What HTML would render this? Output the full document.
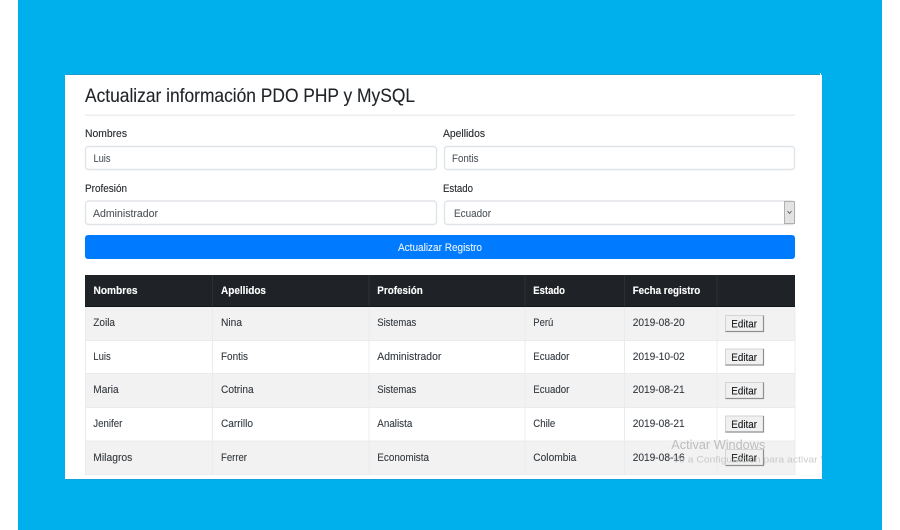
<!DOCTYPE html>
<html lang="es">
<head>
<meta charset="utf-8">
<title>Actualizar información PDO PHP y MySQL</title>
<style>
html,body{margin:0;padding:0;width:900px;height:530px;overflow:hidden;background:#fff}
svg{display:block;position:absolute;left:0;top:0}
text{font-family:"Liberation Sans",Arial,sans-serif;font-size:11.2px;fill:#343a40;stroke:#343a40;stroke-width:.12;filter:blur(.2px)}
.l{fill:#24282c;stroke:#24282c}
.i{fill:#50575e;stroke:#50575e}
.h{font-weight:bold;fill:#fff;stroke:#fff;font-size:11.2px}
.b{fill:#15181b;stroke:#15181b;font-size:11.2px}
</style>
</head>
<body>
<svg width="900" height="530" viewBox="0 0 900 530" xmlns="http://www.w3.org/2000/svg">
<defs><clipPath id="c"><rect x="65" y="75" width="757" height="404"/></clipPath></defs>
<rect x="18" y="0" width="864" height="530" fill="#00b0ec"/>
<rect x="66" y="74" width="754" height="1" fill="#1b9bcb"/>
<rect x="65" y="479" width="757" height="1" fill="#12a3d8"/>
<rect x="65" y="75" width="757" height="404" fill="#fff"/>
<rect x="820" y="73" width="1" height="2" fill="#fff"/>

<text x="85" y="102" style="font-size:19.2px;fill:#212529;stroke:#212529" textLength="330" lengthAdjust="spacingAndGlyphs">Actualizar información PDO PHP y MySQL</text>
<rect x="85" y="114.5" width="710" height="1.5" fill="#eeeeee"/>

<text class="l" x="85" y="137" textLength="42" lengthAdjust="spacingAndGlyphs">Nombres</text>
<text class="l" x="443" y="137" textLength="42" lengthAdjust="spacingAndGlyphs">Apellidos</text>
<rect x="85.5" y="146.5" width="351" height="23" rx="3" fill="#fff" stroke="#e0e4e9" stroke-width="1.4"/>
<rect x="444.5" y="146.5" width="350" height="23" rx="3" fill="#fff" stroke="#e0e4e9" stroke-width="1.4"/>
<text class="i" x="93.5" y="162" textLength="17" lengthAdjust="spacingAndGlyphs">Luis</text>
<text class="i" x="452" y="162" textLength="26.5" lengthAdjust="spacingAndGlyphs">Fontis</text>

<text class="l" x="85" y="192" textLength="42" lengthAdjust="spacingAndGlyphs">Profesión</text>
<text class="l" x="443" y="192" textLength="30" lengthAdjust="spacingAndGlyphs">Estado</text>
<rect x="85.5" y="201" width="351" height="23.5" rx="3" fill="#fff" stroke="#e0e4e9" stroke-width="1.4"/>
<rect x="444.5" y="201" width="350" height="23.5" rx="3" fill="#fff" stroke="#e0e4e9" stroke-width="1.4"/>
<text class="i" x="93" y="217" textLength="65" lengthAdjust="spacingAndGlyphs">Administrador</text>
<text class="i" x="454" y="217" textLength="37" lengthAdjust="spacingAndGlyphs">Ecuador</text>
<rect x="784.5" y="201.5" width="10" height="22" fill="#e3e3e3" stroke="#b0b0b0"/>
<path d="M787.5 211 L789.5 213.5 L791.5 211" fill="none" stroke="#666" stroke-width="1"/>

<rect x="85" y="235" width="710" height="24" rx="3" fill="#007bff"/>
<text x="398" y="251" style="fill:#e8f2ff;stroke:#e8f2ff" textLength="84" lengthAdjust="spacingAndGlyphs">Actualizar Registro</text>

<!-- table -->
<rect x="85" y="275" width="710" height="32" fill="#1f2327"/>
<rect x="85" y="306" width="710" height="1" fill="#14171a"/>
<rect x="85" y="307" width="710" height="33" fill="#f2f2f2"/>
<rect x="85" y="374" width="710" height="33" fill="#f2f2f2"/>
<rect x="85" y="441" width="710" height="33.5" fill="#f2f2f2"/>
<g fill="#e9ecef">
<rect x="85" y="340" width="710" height="1"/>
<rect x="85" y="373" width="710" height="1"/>
<rect x="85" y="407" width="710" height="1"/>
<rect x="85" y="440.5" width="710" height="1"/>
<rect x="85" y="474" width="710" height="1"/>
<rect x="85" y="307" width="1" height="168"/>
<rect x="794.5" y="307" width="1" height="168"/>
<rect x="212" y="307" width="1" height="168"/>
<rect x="368.5" y="307" width="1" height="168"/>
<rect x="524.5" y="307" width="1" height="168"/>
<rect x="624" y="307" width="1" height="168"/>
<rect x="716.5" y="307" width="1" height="168"/>
</g>
<g fill="#2b3035">
<rect x="212" y="275" width="1" height="31"/>
<rect x="368.5" y="275" width="1" height="31"/>
<rect x="524.5" y="275" width="1" height="31"/>
<rect x="624" y="275" width="1" height="31"/>
<rect x="716.5" y="275" width="1" height="31"/>
</g>

<text class="h" x="93.5" y="294" textLength="44" lengthAdjust="spacingAndGlyphs">Nombres</text>
<text class="h" x="221" y="294" textLength="45" lengthAdjust="spacingAndGlyphs">Apellidos</text>
<text class="h" x="377.3" y="294" textLength="45.5" lengthAdjust="spacingAndGlyphs">Profesión</text>
<text class="h" x="533.3" y="294" textLength="31.7" lengthAdjust="spacingAndGlyphs">Estado</text>
<text class="h" x="632.7" y="294" textLength="67.6" lengthAdjust="spacingAndGlyphs">Fecha registro</text>

<g>
<text x="93.3" y="326" textLength="21.7" lengthAdjust="spacingAndGlyphs">Zoila</text>
<text x="221" y="326" textLength="21" lengthAdjust="spacingAndGlyphs">Nina</text>
<text x="377.3" y="326" textLength="39" lengthAdjust="spacingAndGlyphs">Sistemas</text>
<text x="533.3" y="326" textLength="20" lengthAdjust="spacingAndGlyphs">Perú</text>
<text x="632.7" y="326" textLength="52" lengthAdjust="spacingAndGlyphs">2019-08-20</text>

<text x="93.3" y="360" textLength="17.4" lengthAdjust="spacingAndGlyphs">Luis</text>
<text x="221" y="360" textLength="27" lengthAdjust="spacingAndGlyphs">Fontis</text>
<text x="377.3" y="360" textLength="64" lengthAdjust="spacingAndGlyphs">Administrador</text>
<text x="533.3" y="360" textLength="36" lengthAdjust="spacingAndGlyphs">Ecuador</text>
<text x="632.7" y="360" textLength="52" lengthAdjust="spacingAndGlyphs">2019-10-02</text>

<text x="93.3" y="393" textLength="25.4" lengthAdjust="spacingAndGlyphs">Maria</text>
<text x="221" y="393" textLength="32.7" lengthAdjust="spacingAndGlyphs">Cotrina</text>
<text x="377.3" y="393" textLength="39" lengthAdjust="spacingAndGlyphs">Sistemas</text>
<text x="533.3" y="393" textLength="36" lengthAdjust="spacingAndGlyphs">Ecuador</text>
<text x="632.7" y="393" textLength="52" lengthAdjust="spacingAndGlyphs">2019-08-21</text>

<text x="93.3" y="427" textLength="29" lengthAdjust="spacingAndGlyphs">Jenifer</text>
<text x="221" y="427" textLength="32" lengthAdjust="spacingAndGlyphs">Carrillo</text>
<text x="377.3" y="427" textLength="35" lengthAdjust="spacingAndGlyphs">Analista</text>
<text x="533.3" y="427" textLength="22" lengthAdjust="spacingAndGlyphs">Chile</text>
<text x="632.7" y="427" textLength="52" lengthAdjust="spacingAndGlyphs">2019-08-21</text>

<text x="93.3" y="461" textLength="39" lengthAdjust="spacingAndGlyphs">Milagros</text>
<text x="221" y="461" textLength="26" lengthAdjust="spacingAndGlyphs">Ferrer</text>
<text x="377.3" y="461" textLength="51.7" lengthAdjust="spacingAndGlyphs">Economista</text>
<text x="533.3" y="461" textLength="43" lengthAdjust="spacingAndGlyphs">Colombia</text>
<text x="632.7" y="461" textLength="52" lengthAdjust="spacingAndGlyphs">2019-08-16</text>
</g>

<!-- buttons -->
<g fill="#f0f0f0" stroke="#d4d4d4" stroke-width="1">
<rect x="725.5" y="315.5" width="38" height="16"/>
<rect x="725.5" y="349" width="38" height="16"/>
<rect x="725.5" y="382.5" width="38" height="16"/>
<rect x="725.5" y="416" width="38" height="16"/>
<rect x="725.5" y="449.5" width="38" height="16"/>
</g>
<g fill="none" stroke="#8f8f8f" stroke-width="1.2">
<path d="M725.5 331.5H763.5V315.5"/>
<path d="M725.5 365H763.5V349"/>
<path d="M725.5 398.5H763.5V382.5"/>
<path d="M725.5 432H763.5V416"/>
<path d="M725.5 465.5H763.5V449.5"/>
</g>
<text class="b" x="731.3" y="327.5" textLength="25.7" lengthAdjust="spacingAndGlyphs">Editar</text>
<text class="b" x="731.3" y="361" textLength="25.7" lengthAdjust="spacingAndGlyphs">Editar</text>
<text class="b" x="731.3" y="394.5" textLength="25.7" lengthAdjust="spacingAndGlyphs">Editar</text>
<text class="b" x="731.3" y="428" textLength="25.7" lengthAdjust="spacingAndGlyphs">Editar</text>
<text class="b" x="731.3" y="461.5" textLength="25.7" lengthAdjust="spacingAndGlyphs">Editar</text>

<!-- watermark -->
<g clip-path="url(#c)">
<text x="671.3" y="449" style="font-size:13px;fill:#bdbdbd;stroke:none" textLength="94" lengthAdjust="spacingAndGlyphs">Activar Windows</text>
<text x="672.7" y="462.5" style="font-size:9.5px;fill:#c2c2c2;stroke:none;opacity:.85" textLength="190" lengthAdjust="spacingAndGlyphs">Ve a Configuración para activar Windows</text>
</g>
</svg>
</body>
</html>
